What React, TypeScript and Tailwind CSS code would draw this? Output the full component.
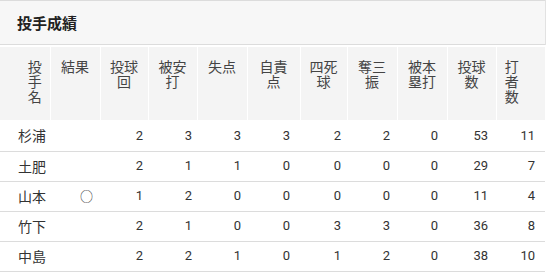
import React from "react";

type Row = {
  name: string;
  result: string;
  stats: number[];
};

const headers: string[][] = [
  ["投", "手", "名"],
  ["結果"],
  ["投球", "回"],
  ["被安", "打"],
  ["失点"],
  ["自責", "点"],
  ["四死", "球"],
  ["奪三", "振"],
  ["被本", "塁打"],
  ["投球", "数"],
  ["打", "者", "数"],
];

const colWidths = [50, 50, 48, 49, 50, 53, 47, 50, 50, 49, 49];

// 数字セルの右余白（参照画像に合わせて列ごとに調整）
const numPad = ["pr-[5px]", "pr-[5px]", "pr-[6px]", "pr-[10px]", "pr-[6px]", "pr-[7px]", "pr-[9px]", "pr-[8px]", "pr-[10px]"];

const rows: Row[] = [
  { name: "杉浦", result: "", stats: [2, 3, 3, 3, 2, 2, 0, 53, 11] },
  { name: "土肥", result: "", stats: [2, 1, 1, 0, 0, 0, 0, 29, 7] },
  { name: "山本", result: "○", stats: [1, 2, 0, 0, 0, 0, 0, 11, 4] },
  { name: "竹下", result: "", stats: [2, 1, 0, 0, 3, 3, 0, 36, 8] },
  { name: "中島", result: "", stats: [2, 2, 1, 0, 1, 2, 0, 38, 10] },
];

export default function App() {
  return (
    <div className="w-[553px] h-[274px] bg-white overflow-hidden font-['Noto_Sans_CJK_JP',sans-serif]">
      <div className="w-[546px] border-r border-[#e2e2e2]">
        <div className="h-[45px] bg-[#f7f7f7] border-t border-b border-[#dcdcdc] flex items-center pl-[17px]">
          <h2 className="text-[15px] font-bold text-[#222] leading-none">投手成績</h2>
        </div>
      </div>
      <table className="table-fixed w-[545px] border-collapse mt-[2px]">
        <colgroup>
          {colWidths.map((w, i) => (
            <col key={i} style={{ width: w }} />
          ))}
        </colgroup>
        <thead>
          <tr>
            {headers.map((lines, i) => (
              <th
                key={i}
                className={`h-[73px] align-top pt-[12px] bg-[#f4f4f4] font-normal text-[14px] leading-[15px] text-[#444] text-center border-l border-white ${
                  i === 0 ? "pl-[20px] border-l-0" : i === 10 ? "pr-[18px]" : ""
                }`}
              >
                {lines.map((l, j) => (
                  <div key={j}>{l}</div>
                ))}
              </th>
            ))}
          </tr>
        </thead>
        <tbody>
          {rows.map((r) => (
            <tr key={r.name} className="h-[30px] border-b border-[#dcdcdc] first:h-[31px]">
              <td className="pl-[18px] text-[14px] text-[#333]">{r.name}</td>
              <td className="pr-[7px] text-right text-[13px] text-[#333]">{r.result}</td>
              {r.stats.map((s, i) => (
                <td key={i} className={`${numPad[i]} text-right text-[13px] text-[#333] font-['Roboto',sans-serif]`}>
                  {s}
                </td>
              ))}
            </tr>
          ))}
        </tbody>
      </table>
    </div>
  );
}
